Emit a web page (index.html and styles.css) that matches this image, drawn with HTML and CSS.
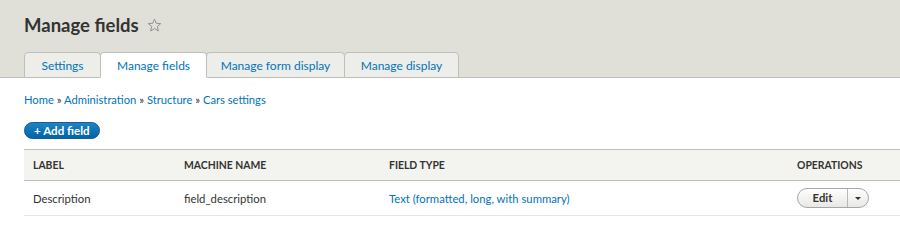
FILE: index.html
```html
<!DOCTYPE html>
<html lang="en">
<head>
    <meta charset="UTF-8">
    <title>Manage fields</title>
    <link rel="stylesheet" href="styles.css">
</head>
<body>
    <div class="header">
        <h1 class="page-title">Manage fields <span class="shortcut">
            <svg width="15" height="15" viewBox="0 0 16 16"><path d="M8 1.2l1.9 4.4 4.7.4-3.6 3.1 1.1 4.7L8 11.3l-4.1 2.5 1.1-4.7L1.4 6l4.7-.4z" fill="none" stroke="#8e8e86" stroke-width="1" stroke-linejoin="round"/></svg>
        </span></h1>
        <ul class="tabs">
            <li><a href="#">Settings</a></li>
            <li class="active"><a href="#">Manage fields</a></li>
            <li><a href="#">Manage form display</a></li>
            <li><a href="#">Manage display</a></li>
        </ul>
    </div>
    <div class="content">
        <div class="breadcrumb">
            <a href="#">Home</a> » <a href="#">Administration</a> » <a href="#">Structure</a> » <a href="#">Cars settings</a>
        </div>
        <a href="#" class="button-add">+ Add field</a>
        <table class="field-table">
            <thead>
                <tr>
                    <th class="col-label">Label</th>
                    <th class="col-machine">Machine name</th>
                    <th class="col-type">Field type</th>
                    <th class="col-ops">Operations</th>
                </tr>
            </thead>
            <tbody>
                <tr>
                    <td>Description</td>
                    <td>field_description</td>
                    <td><a href="#">Text (formatted, long, with summary)</a></td>
                    <td>
                        <div class="dropbutton">
                            <a href="#" class="drop-main">Edit</a>
                            <span class="drop-toggle"><span class="caret"></span></span>
                        </div>
                    </td>
                </tr>
            </tbody>
        </table>
    </div>
</body>
</html>
```

FILE: styles.css
```css
body {
    margin: 0;
    font-family: Lato, "Liberation Sans", sans-serif;
    font-size: 12px;
    color: #333;
    background-color: #fff;
}
a {
    color: #0074bd;
    text-decoration: none;
}
.header {
    background-color: #e0e0d8;
    padding: 15px 0 0 24px;
    border-bottom: 1px solid #bfbfba;
}
.page-title {
    margin: 0;
    font-size: 18.5px;
    font-weight: bold;
    color: #333;
    display: flex;
    align-items: center;
    height: 20px;
    gap: 8px;
}
.shortcut {
    display: flex;
    align-items: center;
}
.tabs {
    list-style: none;
    margin: 17px 0 -1px 0;
    padding: 0;
    display: flex;
}
.tabs li {
    border: 1px solid #bfbfba;
    border-radius: 4px 4px 0 0;
    background-color: #ededea;
    margin-right: -1px;
}
.tabs li a {
    display: block;
    height: 24px;
    line-height: 25px;
    text-align: center;
}
.tabs li:nth-child(1) a { width: 75px; }
.tabs li:nth-child(2) a { width: 105px; }
.tabs li:nth-child(3) a { width: 137px; }
.tabs li:nth-child(4) a { width: 113px; }
.tabs li.active {
    background-color: #fff;
    border-bottom-color: #fff;
    position: relative;
    z-index: 1;
}
.content {
    padding: 15px 0 0 24px;
}
.breadcrumb {
    height: 14px;
    line-height: 14px;
    font-size: 11.2px;
}
.button-add {
    display: inline-block;
    margin-top: 15px;
    height: 17px;
    line-height: 16px;
    padding: 0 9px;
    border-radius: 9px;
    background-color: #0071b8;
    background-image: linear-gradient(#1d84c6, #0064a8);
    border: 1px solid #1e5c90;
    box-sizing: border-box;
    color: #fff;
    font-weight: bold;
    font-size: 11.6px;
}
.field-table {
    width: 100%;
    margin-top: 10px;
    border-collapse: collapse;
    font-size: 11.3px;
}
.field-table th {
    background-color: #f3f3ef;
    border-top: 1px solid #bfbfba;
    border-bottom: 1px solid #bfbfba;
    text-transform: uppercase;
    text-align: left;
    font-size: 10.4px;
    font-weight: bold;
    color: #333;
    height: 30px;
    padding: 0 9px;
}
.field-table td {
    height: 34px;
    padding: 0 9px;
    border-bottom: 1px solid #e6e4df;
}
.col-label { width: 133px; }
.col-machine { width: 187px; }
.col-type { width: 390px; }
.dropbutton {
    display: inline-flex;
    height: 20px;
    border: 1px solid #a6a6a6;
    border-radius: 11px;
    background-image: linear-gradient(#fefefe, #e8e8e6);
    box-sizing: border-box;
    font-weight: bold;
}
.drop-main {
    width: 49px;
    text-align: center;
    line-height: 18px;
    color: #333;
    border-right: 1px solid #b8b8b4;
}
.drop-toggle {
    width: 20px;
    display: flex;
    align-items: center;
    justify-content: center;
}
.caret {
    width: 0;
    height: 0;
    border-left: 3px solid transparent;
    border-right: 3px solid transparent;
    border-top: 3px solid #333;
}
```
